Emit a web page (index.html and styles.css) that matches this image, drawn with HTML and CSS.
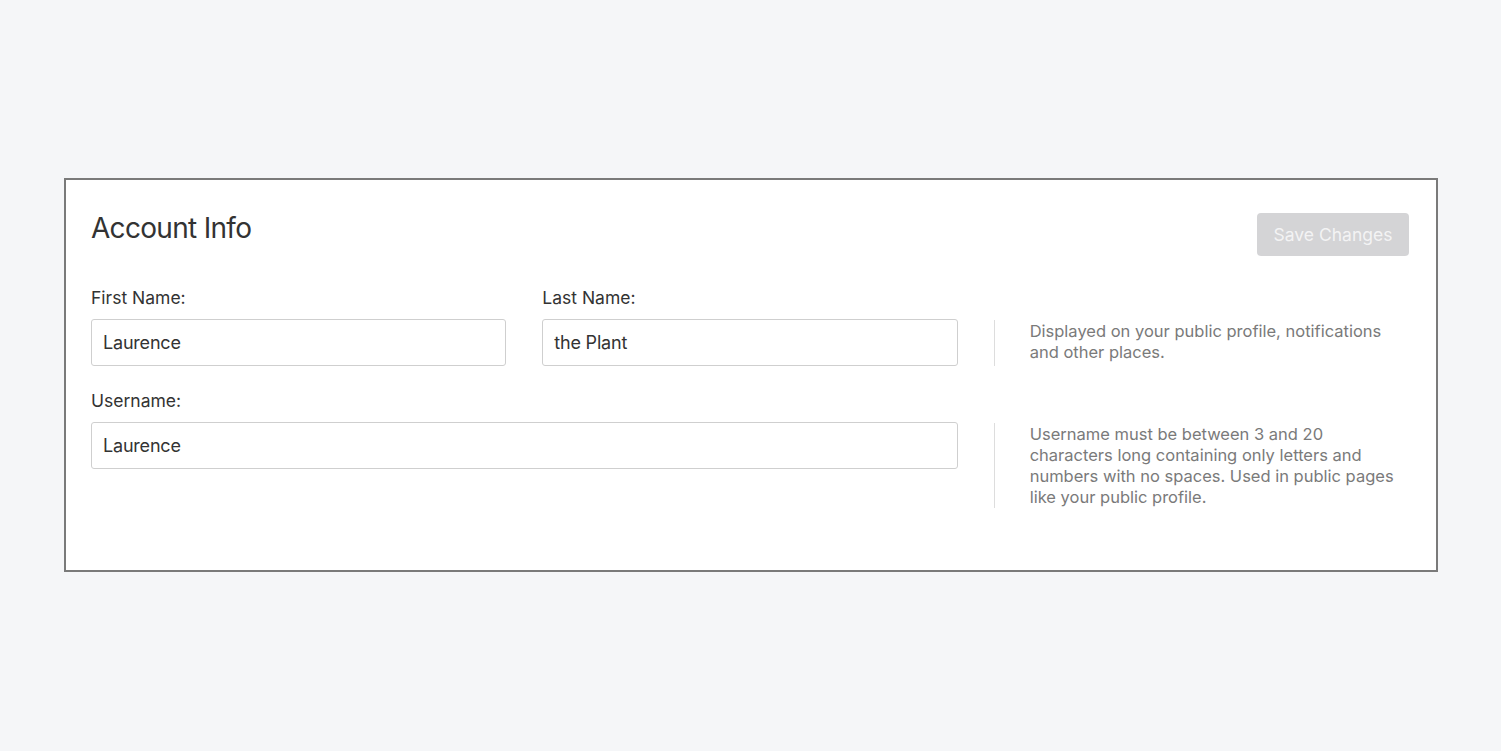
FILE: index.html
```html
<!DOCTYPE html>
<html lang="en">
<head>
  <meta charset="UTF-8">
  <title>Account Info</title>
  <link rel="stylesheet" href="styles.css">
</head>
<body>
  <div class="card">
    <div class="card-header">
      <h2>Account Info</h2>
      <button class="save-button" disabled>Save Changes</button>
    </div>

    <!-- Name row -->
    <div class="form-row">
      <div class="field">
        <label for="firstName">First Name:</label>
        <input type="text" id="firstName" value="Laurence">
      </div>
      <div class="field">
        <label for="lastName">Last Name:</label>
        <input type="text" id="lastName" value="the Plant">
      </div>
      <p class="help">Displayed on your public profile, notifications and other places.</p>
    </div>

    <!-- Username row -->
    <div class="form-row">
      <div class="field wide">
        <label for="username">Username:</label>
        <input type="text" id="username" value="Laurence">
      </div>
      <p class="help">Username must be between 3 and 20 characters long containing only letters and numbers with no spaces. Used in public pages like your public profile.</p>
    </div>
  </div>
</body>
</html>
```

FILE: styles.css
```css
body {
  margin: 0;
  padding: 178px 63px 0 64px;
  background: #f5f6f8;
  font-family: 'Inter', sans-serif;
  color: #333;
}

.card {
  background: #fff;
  border: 2px solid #7a7a7a;
  padding: 31px 27px 62px 25px;
}

.card-header {
  display: flex;
  justify-content: space-between;
  align-items: flex-start;
  margin-bottom: 32px;
}

.card-header h2 {
  margin: 0;
  font-size: 28px;
  font-weight: 400;
  letter-spacing: -0.7px;
  color: #333;
  line-height: 34px;
}

.save-button {
  margin-top: 2px;
  width: 152px;
  height: 43px;
  background: #d4d4d6;
  color: #f3f3f4;
  border: none;
  border-radius: 4px;
  font-family: 'Inter', sans-serif;
  font-size: 17.5px;
}

/* three equal columns: two fields + help text */
.form-row {
  display: grid;
  grid-template-columns: repeat(3, 1fr);
  column-gap: 36px;
}

.form-row + .form-row {
  margin-top: 25px;
}

.field {
  display: flex;
  flex-direction: column;
}

.field.wide {
  grid-column: span 2;
}

.field label {
  font-size: 17.5px;
  line-height: 20px;
  margin-bottom: 11px;
  color: #333;
}

.field input {
  height: 47px;
  box-sizing: border-box;
  border: 1px solid #cfcfcf;
  border-radius: 3px;
  padding: 0 11px;
  font-family: 'Inter', sans-serif;
  font-size: 18px;
  letter-spacing: -0.2px;
  color: #333;
  outline: none;
}

.help {
  margin: 32px 0 0;
  padding: 1px 0 0 35px;
  border-left: 1px solid #ddd;
  font-size: 16.5px;
  line-height: 21px;
  color: #7a7a7a;
}
```
